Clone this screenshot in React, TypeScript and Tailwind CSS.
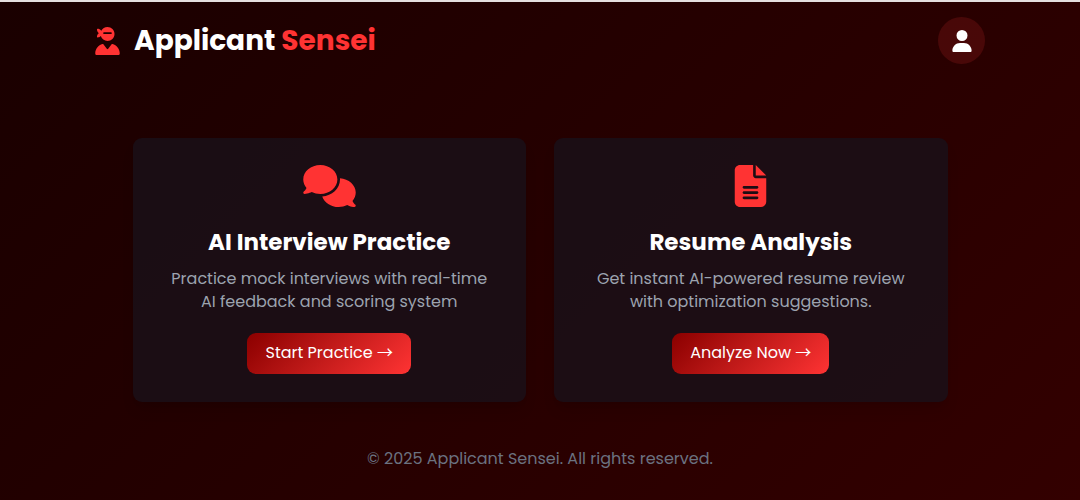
import type { IconType } from "react-icons";
import { FaComments, FaFileLines, FaUser, FaUserNinja } from "react-icons/fa6";

type Feature = {
  icon: IconType;
  title: string;
  lines: [string, string];
  action: string;
};

const features: Feature[] = [
  {
    icon: FaComments,
    title: "AI Interview Practice",
    lines: ["Practice mock interviews with real-time", "AI feedback and scoring system"],
    action: "Start Practice →",
  },
  {
    icon: FaFileLines,
    title: "Resume Analysis",
    lines: ["Get instant AI-powered resume review", "with optimization suggestions."],
    action: "Analyze Now →",
  },
];

function FeatureCard({ icon: Icon, title, lines, action }: Feature) {
  return (
    <article className="flex flex-col items-center rounded-[9px] bg-[#1a0f18]/85 px-4 pt-[27px] pb-7 text-center shadow-lg shadow-black/10">
      <Icon className="h-[42px] w-[53px] text-[#ff3333]" aria-hidden="true" />
      <h2 className="mt-5 text-[23px] leading-[30px] font-bold whitespace-nowrap text-white">{title}</h2>
      <p className="mt-[10px] text-base leading-[23px] text-[#9ca3af]">
        {lines[0]}
        <br />
        {lines[1]}
      </p>
      <a
        href="#"
        className="mt-5 rounded-[9px] bg-linear-135 from-[#8b0000] to-[#ff3333] px-[18px] pt-2 pb-[10px] text-base leading-[23px] whitespace-nowrap text-white"
      >
        {action}
      </a>
    </article>
  );
}

export default function App() {
  return (
    <div className="flex min-h-screen flex-col border-t-2 border-[#e5dfdf] bg-linear-135 from-[#1a0000] to-[#330000] font-['Poppins','Noto_Sans_CJK_JP',sans-serif]">
      <header className="mx-auto flex w-full max-w-[890px] items-center justify-between pt-[15px]">
        <a href="#" className="flex items-center gap-[14px] text-[28px] leading-[42px] font-bold text-white">
          <FaUserNinja className="h-7 w-[25px] text-[#ff3333]" aria-hidden="true" />
          <span>
            Applicant <span className="text-[#ff3333]">Sensei</span>
          </span>
        </a>
        <button
          type="button"
          aria-label="Account"
          className="flex size-[47px] items-center justify-center rounded-full bg-[#ff3333]/15 text-white"
        >
          <FaUser className="text-[22px]" />
        </button>
      </header>
      <main className="mx-auto mt-[74px] grid w-full max-w-[815px] grid-cols-2 gap-7">
        {features.map((feature) => (
          <FeatureCard key={feature.title} {...feature} />
        ))}
      </main>
      <footer className="mt-[45px] text-center text-base leading-6 text-[#6b7280]">
        © 2025 Applicant Sensei. All rights reserved.
      </footer>
    </div>
  );
}
